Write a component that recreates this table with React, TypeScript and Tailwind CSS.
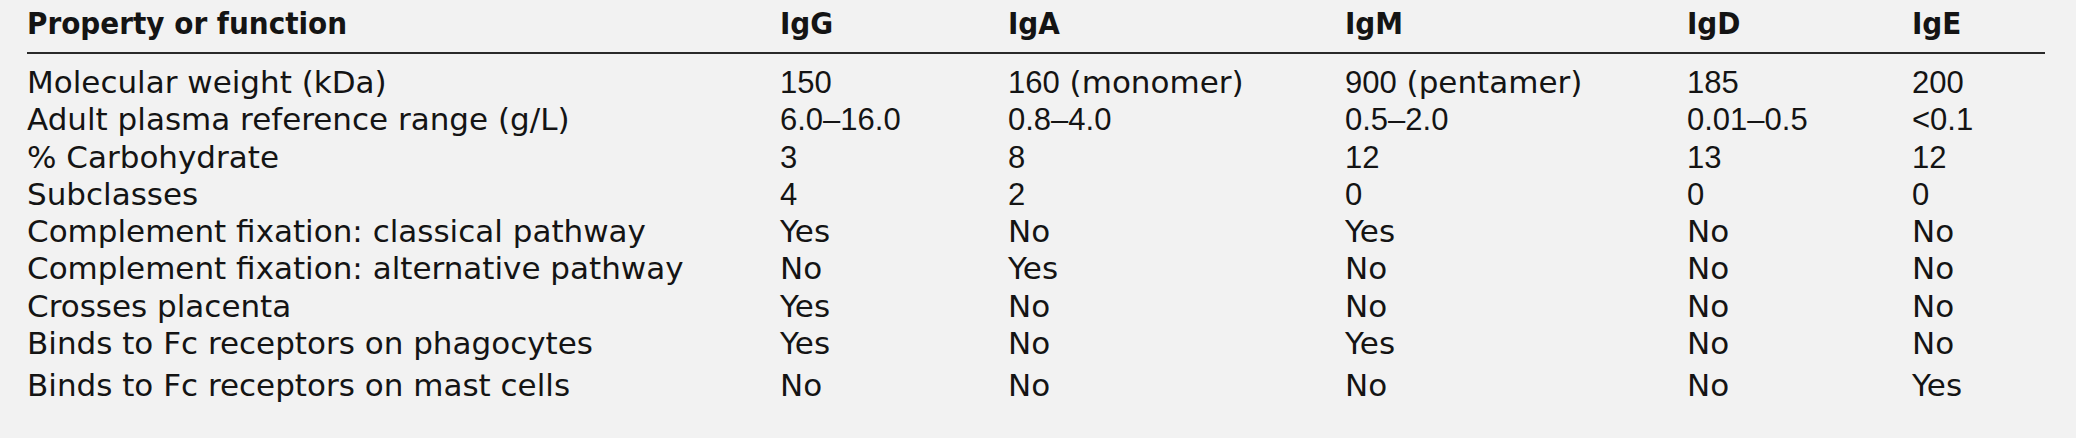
import React from "react";

const headers = ["Property or function", "IgG", "IgA", "IgM", "IgD", "IgE"];

const rows: string[][] = [
  ["Molecular weight (kDa)", "150", "160 (monomer)", "900 (pentamer)", "185", "200"],
  ["Adult plasma reference range (g/L)", "6.0–16.0", "0.8–4.0", "0.5–2.0", "0.01–0.5", "<0.1"],
  ["% Carbohydrate", "3", "8", "12", "13", "12"],
  ["Subclasses", "4", "2", "0", "0", "0"],
  ["Complement fixation: classical pathway", "Yes", "No", "Yes", "No", "No"],
  ["Complement fixation: alternative pathway", "No", "Yes", "No", "No", "No"],
  ["Crosses placenta", "Yes", "No", "No", "No", "No"],
  ["Binds to Fc receptors on phagocytes", "Yes", "No", "Yes", "No", "No"],
  ["Binds to Fc receptors on mast cells", "No", "No", "No", "No", "Yes"],
];

function Mixed({ text }: { text: string }) {
  const parts = text.split(/([0-9.–<]+)/);
  return (
    <>
      {parts.map((p, i) =>
        p === "" ? null : /^[0-9.–<]+$/.test(p) ? (
          <span key={i} className="font-['Liberation_Sans',Arial,sans-serif]">
            {p}
          </span>
        ) : (
          <span key={i}>{p}</span>
        )
      )}
    </>
  );
}

const grid = "grid grid-cols-[753px_228px_337px_342px_225px_133px]";

export default function App() {
  return (
    <div className="min-h-[438px] w-full bg-[#f2f2f2] pl-[27px] pr-[31px] text-[#141414]">
      <div
        className={`${grid} pt-[5px] pb-[10px] font-['DejaVu_Sans_Condensed','DejaVu_Sans',sans-serif] font-bold font-stretch-condensed text-[31px] leading-[37px]`}
      >
        {headers.map((h) => (
          <div key={h} className="whitespace-nowrap">
            {h}
          </div>
        ))}
      </div>
      <div className="h-[2px] bg-[#2a2a2a]" />
      <div className="pt-[10px] font-['DejaVu_Sans',sans-serif] text-[31px] leading-[37.3px]">
        {rows.map((r, ri) => (
          <div
            key={ri}
            className={`${grid} ${ri === rows.length - 1 ? "pt-[5px]" : ""}`}
          >
            {r.map((c, ci) => (
              <div key={ci} className="whitespace-nowrap">
                {ci === 0 ? c : <Mixed text={c} />}
              </div>
            ))}
          </div>
        ))}
      </div>
    </div>
  );
}
